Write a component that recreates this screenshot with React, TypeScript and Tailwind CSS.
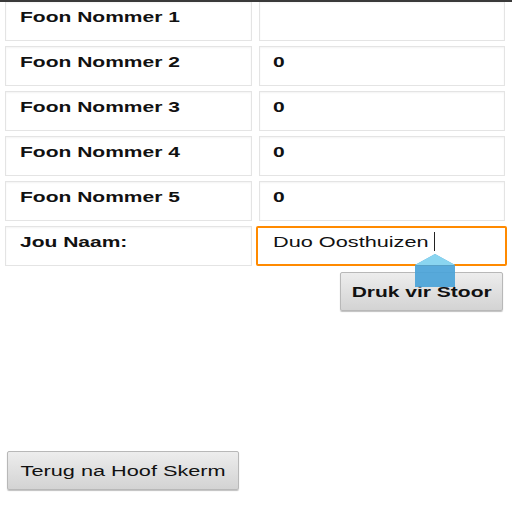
import React from "react";

const font = { fontFamily: '"Liberation Sans", Arial, sans-serif' };

function Row({ label, value, focused }: { label: string; value?: string; focused?: boolean }) {
  return (
    <div className="flex h-[40px] items-stretch">
      <div className="ml-[5px] w-[247px] border border-[#e4e4e4] bg-white pl-[14px] pt-[3px] shadow-[inset_0_1px_2px_rgba(0,0,0,0.05)]">
        <span className="inline-block origin-left scale-x-[1.5] text-[14px] leading-[16px] font-bold text-[#111]">{label}</span>
      </div>
      {focused ? (
        <div className="relative ml-[4px] w-[251px] rounded-[2px] border-2 border-[#ff8a00] bg-white pl-[15px] pt-[2px]">
          <span className="inline-block origin-left scale-x-[1.55] text-[14px] leading-[16px] text-[#111]">{value}</span>
          <div className="absolute left-[176px] top-[4px] h-[19px] w-[1px] bg-[#222]" />
        </div>
      ) : (
        <div className="ml-[7px] w-[246px] border border-[#e4e4e4] bg-white pl-[13px] pt-[3px] shadow-[inset_0_1px_2px_rgba(0,0,0,0.05)]">
          <span className="inline-block origin-left scale-x-[1.5] text-[14px] leading-[16px] font-bold text-[#111]">{value}</span>
        </div>
      )}
    </div>
  );
}

export default function App() {
  return (
    <div className="relative h-[512px] w-[512px] overflow-hidden bg-white" style={font}>
      <div className="pt-[1px]">
        <div className="flex flex-col gap-[5px]">
          <Row label="Foon Nommer 1" value="" />
          <Row label="Foon Nommer 2" value="0" />
          <Row label="Foon Nommer 3" value="0" />
          <Row label="Foon Nommer 4" value="0" />
          <Row label="Foon Nommer 5" value="0" />
          <Row label="Jou Naam:" value="Duo Oosthuizen" focused />
        </div>
        <div className="mt-[6px] flex justify-end pr-[9px]">
          <button className="flex h-[39px] w-[163px] items-center justify-center rounded-[2px] border border-[#b8b8b8] bg-gradient-to-b from-[#ededed] to-[#d3d3d3] shadow-[0_1px_1px_rgba(0,0,0,0.25)]">
            <span className="inline-block scale-x-[1.5] text-[14px] leading-[16px] font-bold text-[#111]">Druk vir Stoor</span>
          </button>
        </div>
        <div className="mt-[140px] pl-[7px]">
          <button className="flex h-[39px] w-[232px] items-center justify-center rounded-[2px] border border-[#b8b8b8] bg-gradient-to-b from-[#ededed] to-[#d3d3d3] shadow-[0_1px_1px_rgba(0,0,0,0.25)]">
            <span className="inline-block scale-x-[1.55] text-[14px] leading-[16px] text-[#111]">Terug na Hoof Skerm</span>
          </button>
        </div>
      </div>
      <div className="absolute left-0 right-0 top-0 h-[2px] bg-[#3a3a3a]" />
      <svg className="absolute left-[414px] top-[254px]" width="42" height="34" viewBox="0 0 42 34">
        <polygon points="21,0 41,11 41,33 1,33 1,11" fill="#4aa3d8" fillOpacity="0.92" />
        <polygon points="21,0 41,11 1,11" fill="#8ad5f0" />
      </svg>
    </div>
  );
}
